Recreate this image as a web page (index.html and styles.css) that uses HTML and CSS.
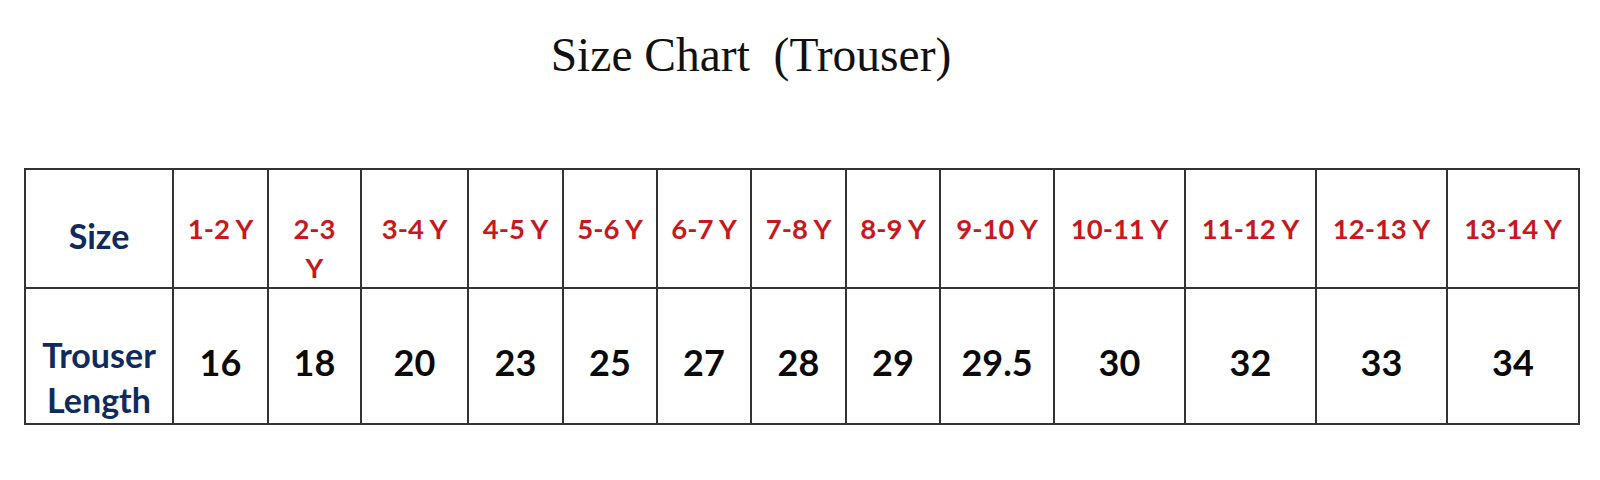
FILE: index.html
```html
<!DOCTYPE html>
<html lang="en">
<head>
<meta charset="utf-8">
<title>Size Chart (Trouser)</title>
<link rel="stylesheet" href="styles.css">
</head>
<body>
<div class="page">
  <h1 class="title">Size Chart&nbsp; (Trouser)</h1>
  <table class="chart">
    <colgroup>
      <col class="w-label">
      <col class="w-a">
      <col class="w-b">
      <col class="w-c">
      <col class="w-a">
      <col class="w-d">
      <col class="w-d">
      <col class="w-a">
      <col class="w-d">
      <col class="w-e">
      <col class="w-f">
      <col class="w-f">
      <col class="w-f">
      <col class="w-g">
    </colgroup>
    <tr class="head">
      <th class="label label-size">Size</th>
      <td class="age">1-2 Y</td>
      <td class="age">2-3<br>Y</td>
      <td class="age">3-4 Y</td>
      <td class="age">4-5 Y</td>
      <td class="age">5-6 Y</td>
      <td class="age">6-7 Y</td>
      <td class="age">7-8 Y</td>
      <td class="age">8-9 Y</td>
      <td class="age">9-10 Y</td>
      <td class="age">10-11 Y</td>
      <td class="age">11-12 Y</td>
      <td class="age">12-13 Y</td>
      <td class="age">13-14 Y</td>
    </tr>
    <tr class="body">
      <th class="label label-length">Trouser<br>Length</th>
      <td class="num">16</td>
      <td class="num">18</td>
      <td class="num">20</td>
      <td class="num">23</td>
      <td class="num">25</td>
      <td class="num">27</td>
      <td class="num">28</td>
      <td class="num">29</td>
      <td class="num">29.5</td>
      <td class="num">30</td>
      <td class="num">32</td>
      <td class="num">33</td>
      <td class="num">34</td>
    </tr>
  </table>
</div>
</body>
</html>
```

FILE: styles.css
```css
html, body {
  margin: 0;
  padding: 0;
  background: #ffffff;
}

.page {
  width: 1600px;
  height: 480px;
  overflow: hidden;
}

.title {
  margin: 0;
  padding: 29px 98px 0 0;
  font-family: "Liberation Serif", "Times New Roman", serif;
  font-weight: normal;
  font-size: 47.5px;
  line-height: 53px;
  color: #111111;
  text-align: center;
}

.chart {
  margin: 86px 0 0 24px;
  width: 1554px;
  table-layout: fixed;
  border-collapse: collapse;
  font-family: Lato, "Noto Sans", sans-serif;
  font-weight: 700;
}

.w-label { width: 148px; }
.w-a { width: 95px; }
.w-b { width: 93px; }
.w-c { width: 107px; }
.w-d { width: 94px; }
.w-e { width: 114px; }
.w-f { width: 131px; }
.w-g { width: 132px; }

.chart th,
.chart td {
  border: 2px solid #333333;
  padding: 0;
  text-align: center;
  vertical-align: top;
  font-weight: 700;
}

.head {
  height: 118px;
}

.body {
  height: 136px;
}

.chart .label {
  color: #0f2a5c;
  font-size: 34px;
}

.chart .label-size {
  padding-top: 46px;
  line-height: 39px;
}

.chart .label-length {
  padding-top: 43px;
  line-height: 45px;
}

.chart .age {
  color: #c8171d;
  font-size: 27.5px;
  line-height: 39px;
  padding-top: 39px;
}

.chart .num {
  color: #0a0a0a;
  font-size: 36px;
  line-height: 40px;
  padding-top: 53px;
}
```
